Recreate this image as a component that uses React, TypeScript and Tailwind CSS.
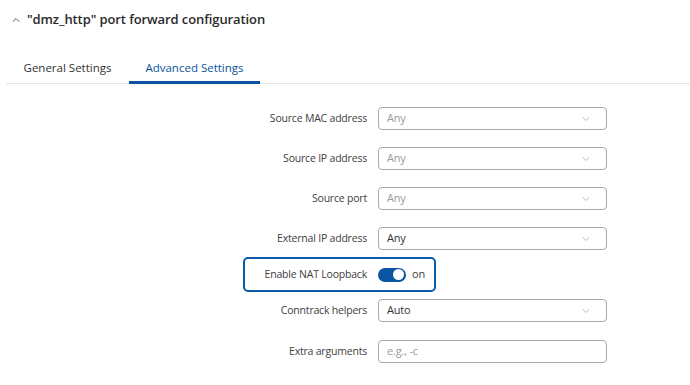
import { ChevronDown, ChevronUp } from 'lucide-react'

type Row = { label: string; value: string; placeholder?: boolean; select?: boolean }

const topRows: Row[] = [
  { label: 'Source MAC address', value: 'Any', placeholder: true, select: true },
  { label: 'Source IP address', value: 'Any', placeholder: true, select: true },
  { label: 'Source port', value: 'Any', placeholder: true, select: true },
  { label: 'External IP address', value: 'Any', select: true },
]

function Field({ row }: { row: Row }) {
  return (
    <div className="flex items-center h-[23px] ml-[245px]">
      <span className="w-[122px] text-right text-[10.5px] tracking-[-0.2px] text-[#404040] whitespace-nowrap">{row.label}</span>
      <div className="ml-[11px] w-[229px] h-[23px] border border-[#a9a9a9] rounded-[4px] flex items-center justify-between pl-[8px] pr-[14px]">
        <span className={`text-[11px] tracking-[-0.2px] ${row.placeholder ? 'text-[#9a9a9a]' : 'text-[#333]'}`}>{row.value}</span>
        {row.select && <ChevronDown size={12} strokeWidth={1.2} className="text-[#888]" />}
      </div>
    </div>
  )
}

export default function App() {
  return (
    <div className="w-[690px] h-[385px] bg-white overflow-hidden" style={{ fontFamily: '"Open Sans", sans-serif' }}>
      {/* Header */}
      <div className="flex items-center pt-[9px] pl-[10px] h-[30px]">
        <ChevronUp size={12} strokeWidth={1.6} className="text-[#333]" />
        <h1 className="ml-[5px] text-[13px] tracking-[-0.1px] font-semibold text-[#2b2b2b] leading-none">"dmz_http" port forward configuration</h1>
      </div>

      {/* Tabs */}
      <div className="mt-[27px] ml-[6px] flex border-b border-[#e6e6e6] h-[27px]">
        <div className="w-[123px] flex justify-center text-[11.5px] text-[#333] leading-none pt-[5px]">General Settings</div>
        <div className="w-[131px] flex justify-center text-[11.5px] text-[#0a54a0] leading-none pt-[5px] border-b-[3px] border-[#0a54a0] -mb-[1px]">Advanced Settings</div>
      </div>

      {/* Form */}
      <div className="mt-[23px] flex flex-col">
        <div className="flex flex-col gap-[17px]">
          {topRows.map(r => (
            <Field key={r.label} row={r} />
          ))}
        </div>

        <div className="mt-[7px] ml-[243px] w-[193px] h-[35px] border-2 border-[#0a5aa8] rounded-[5px] flex items-center">
          <span className="w-[122px] text-right text-[10.5px] tracking-[-0.2px] text-[#404040] whitespace-nowrap">Enable NAT Loopback</span>
          <div className="ml-[11px] w-[28px] h-[14px] rounded-full bg-[#0a56a3] flex items-center justify-end pr-[2px]">
            <div className="w-[11px] h-[11px] rounded-full bg-white" />
          </div>
          <span className="ml-[6px] text-[11px] text-[#404040]">on</span>
        </div>

        <div className="mt-[7px] flex flex-col gap-[18px]">
          <Field row={{ label: 'Conntrack helpers', value: 'Auto', select: true }} />
          <Field row={{ label: 'Extra arguments', value: 'e.g., -c', placeholder: true }} />
        </div>
      </div>
    </div>
  )
}
